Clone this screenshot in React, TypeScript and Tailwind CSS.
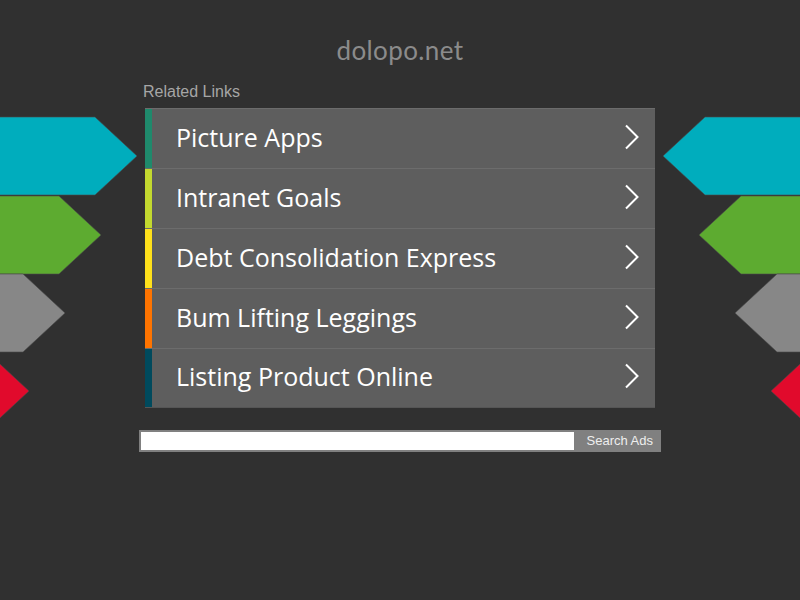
const links = [
  { label: 'Picture Apps', color: 'bg-[#1f8a6c]' },
  { label: 'Intranet Goals', color: 'bg-[#c3d92f]' },
  { label: 'Debt Consolidation Express', color: 'bg-[#ffe11b]' },
  { label: 'Bum Lifting Leggings', color: 'bg-[#ff7400]' },
  { label: 'Listing Product Online', color: 'bg-[#004a5d]' },
];

function Chevron() {
  return (
    <svg width="16" height="26" viewBox="0 0 16 26" fill="none" className="shrink-0">
      <path d="M2 1.5 L13.5 13 L2 24.5" stroke="white" strokeWidth="2" />
    </svg>
  );
}

function SideArrows({ flip }: { flip?: boolean }) {
  const shapes = [
    { y: 117, end: 95, fill: '#00adbd' },
    { y: 196, end: 59, fill: '#5dab30' },
    { y: 274, end: 23, fill: '#878787' },
    { y: 352, end: -13, fill: '#e10a2c' },
  ];
  return (
    <svg
      width="140"
      height="440"
      viewBox="0 0 140 440"
      className={flip ? 'absolute right-0 top-0 -scale-x-100' : 'absolute left-0 top-0'}
    >
      {shapes.map((s) => (
        <polygon
          key={s.y}
          points={`-60,${s.y} ${s.end},${s.y} ${s.end + 42},${s.y + 39} ${s.end},${s.y + 78} -60,${s.y + 78}`}
          fill={s.fill}
          stroke="#4a4a4a"
          strokeWidth="0.6"
        />
      ))}
    </svg>
  );
}

export default function App() {
  return (
    <div className="relative h-[600px] w-[800px] overflow-hidden bg-[#303030] font-['Liberation_Sans',sans-serif]">
      <SideArrows />
      <SideArrows flip />
      <div className="flex flex-col items-center pt-[34px]">
        <h1 className="text-[26px] leading-[32px] text-[#8b8b8b] font-['Lato',sans-serif] tracking-[0.4px]">dolopo.net</h1>
        <div className="mt-[16px] w-[510px]">
          <div className="ml-[-2px] text-[16px] leading-[20px] text-[#a6a6a6]">Related Links</div>
          <ul className="mt-[6px] flex flex-col">
            {links.map((l) => (
              <li
                key={l.label}
                className="box-border flex h-[60px] items-stretch border-t border-[#6c6c6c] bg-[#5e5e5e] last:border-b last:border-b-[#555]"
              >
                <span className={`w-[7px] shrink-0 ${l.color}`} />
                <div className="flex flex-1 items-center justify-between pb-[4px] pl-[24px] pr-[15px]">
                  <span className="text-[25px] leading-[30px] text-white font-['Open_Sans',sans-serif]">
                    {l.label}
                  </span>
                  <Chevron />
                </div>
              </li>
            ))}
          </ul>
        </div>
        <form className="mt-[22px] flex h-[22px] w-[522px] items-center bg-[#808080] p-[2px]">
          <input className="h-[18px] flex-1 border-0 bg-white outline-none" />
          <button type="button" className="pl-[13px] pr-[6px] text-[13px] text-[#eeeeee]">
            Search Ads
          </button>
        </form>
      </div>
    </div>
  );
}
